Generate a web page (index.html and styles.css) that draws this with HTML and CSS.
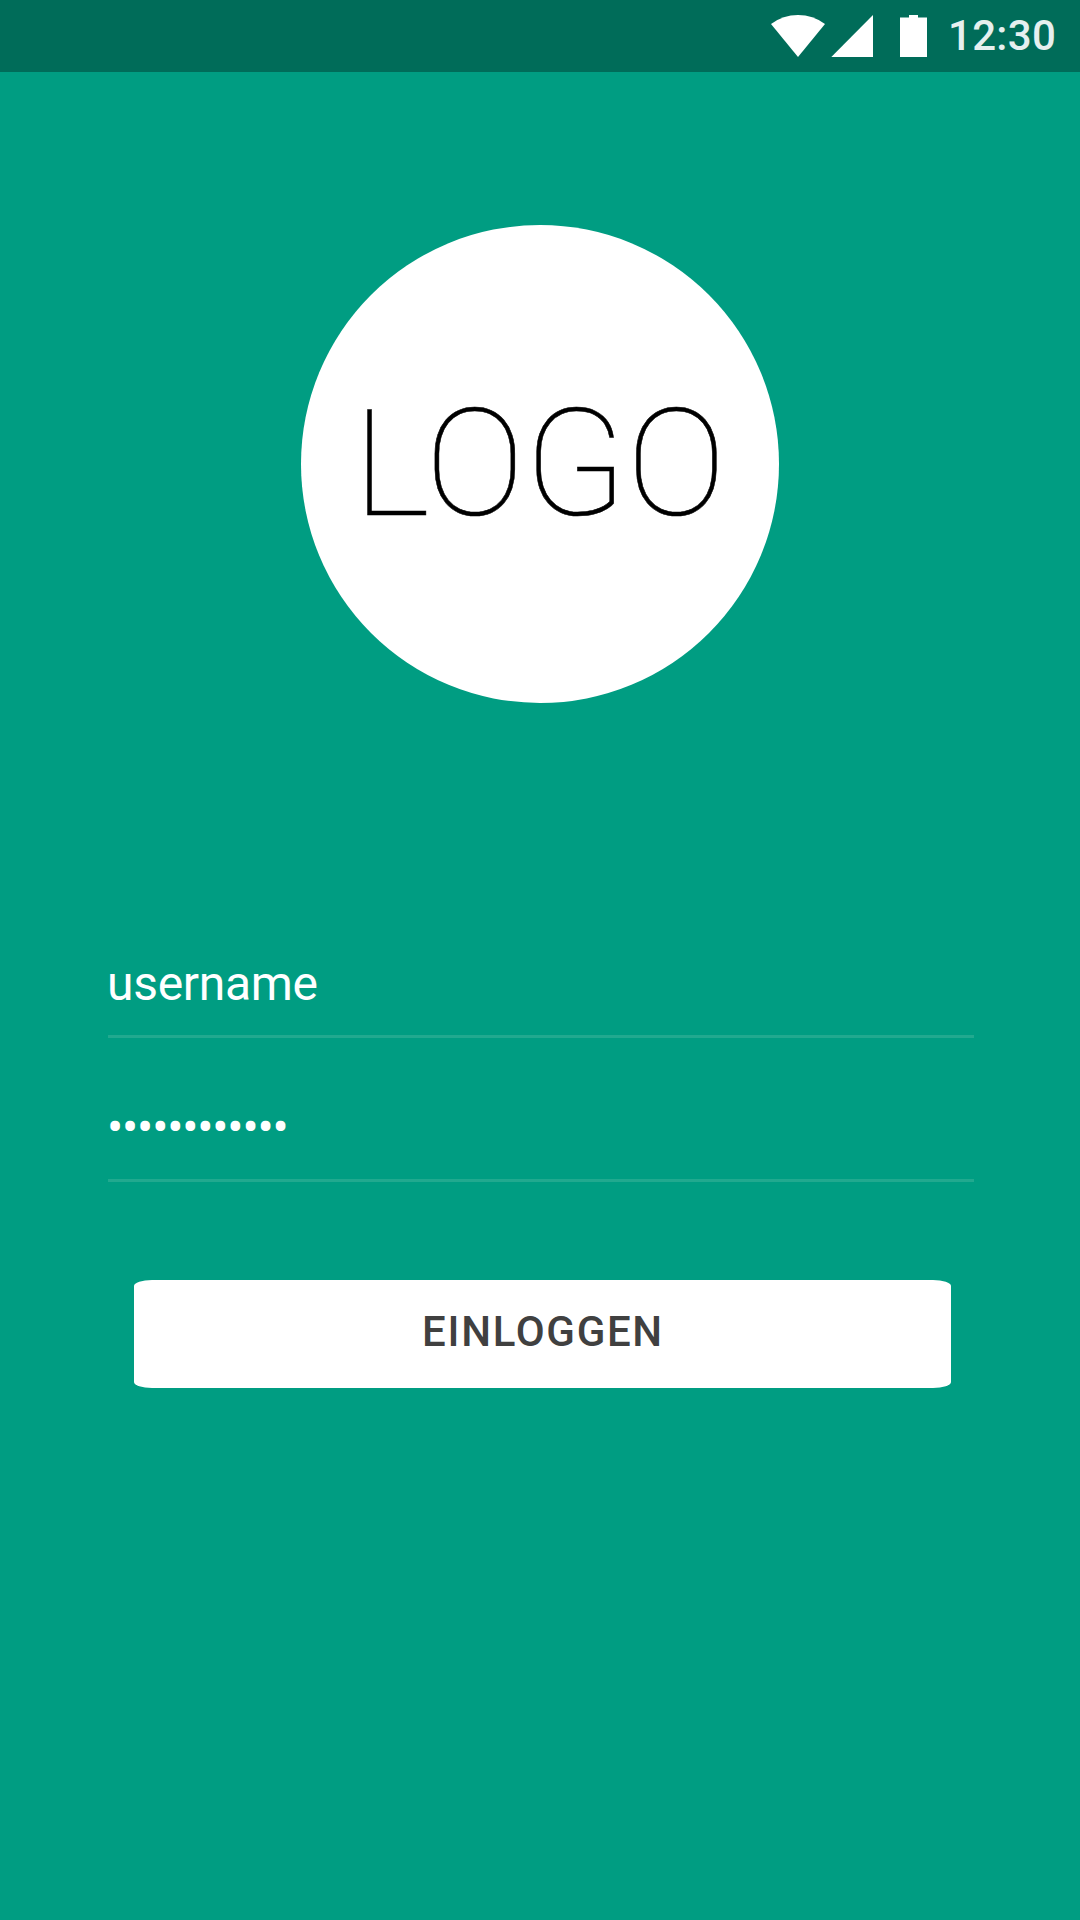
FILE: index.html
```html
<!DOCTYPE html>
<html lang="de">
<head>
<meta charset="utf-8">
<title>Login</title>
<link rel="stylesheet" href="styles.css">
</head>
<body>
<div class="screen">
  <header class="status-bar">
    <svg class="status-icons" width="156" height="42" viewBox="0 0 156 42" fill="#fff" aria-hidden="true">
      <path d="M0 9Q12 0 27 0T54 9L27 42Z"/>
      <path d="M60.3 42L102 0V42Z"/>
      <path d="M129 2.500H138V0H147V2.500H156V42H129Z"/>
    </svg>
    <span class="clock">12:30</span>
  </header>
  <main class="login">
    <div class="logo"><span class="logo-text">LOGO</span></div>
    <form class="form">
      <div class="field"><span class="username">username</span></div>
      <div class="field"><span class="password">••••••••••••</span></div>
      <button class="submit" type="button">EINLOGGEN</button>
    </form>
  </main>
</div>
</body>
</html>
```
FILE: styles.css
```css
* {
  box-sizing: border-box;
}

body {
  margin: 0;
  font-family: Roboto, "Noto Sans", sans-serif;
}

.screen {
  display: flex;
  flex-direction: column;
  height: 1920px;
  background: #009d82;
}

.status-bar {
  display: flex;
  align-items: flex-start;
  justify-content: flex-end;
  height: 72px;
  padding: 15px 24px 0 0;
  background: #006c59;
}

.clock {
  width: 108px;
  margin-left: 21px;
  color: #e6f0ef;
  font-size: 42px;
  font-weight: 500;
  line-height: 42px;
  letter-spacing: 0.3px;
  white-space: nowrap;
}

.login {
  display: flex;
  flex-direction: column;
  align-items: center;
  padding-top: 153px;
}

.logo {
  display: flex;
  align-items: center;
  justify-content: center;
  width: 478px;
  height: 478px;
  border-radius: 50%;
  background: #fff;
}

.logo-text {
  margin-right: 1px;
  color: #000;
  font-size: 149px;
  font-weight: 100;
  line-height: 160px;
  white-space: nowrap;
  -webkit-text-stroke: 0.5px #000;
}

.form {
  display: flex;
  flex-direction: column;
  width: 866px;
  margin: 191px 0 0 2px;
}

.field {
  display: flex;
  align-items: center;
  height: 144px;
  border-bottom: 3px solid #21a98f;
  color: #fff;
  font-size: 48px;
  white-space: nowrap;
}

.username {
  margin-left: -1px;
  padding-top: 38px;
  letter-spacing: -0.3px;
}

.password {
  margin-left: -1px;
  padding-top: 38px;
  letter-spacing: -1.15px;
}

.submit {
  width: 817px;
  height: 108px;
  margin: 98px 0 0 26px;
  padding: 0 0 5px 1px;
  border: 0;
  border-radius: 18px / 6px;
  background: #fff;
  color: #404040;
  font: 500 42px/50px Roboto, "Noto Sans", sans-serif;
  letter-spacing: 1.7px;
}
```
